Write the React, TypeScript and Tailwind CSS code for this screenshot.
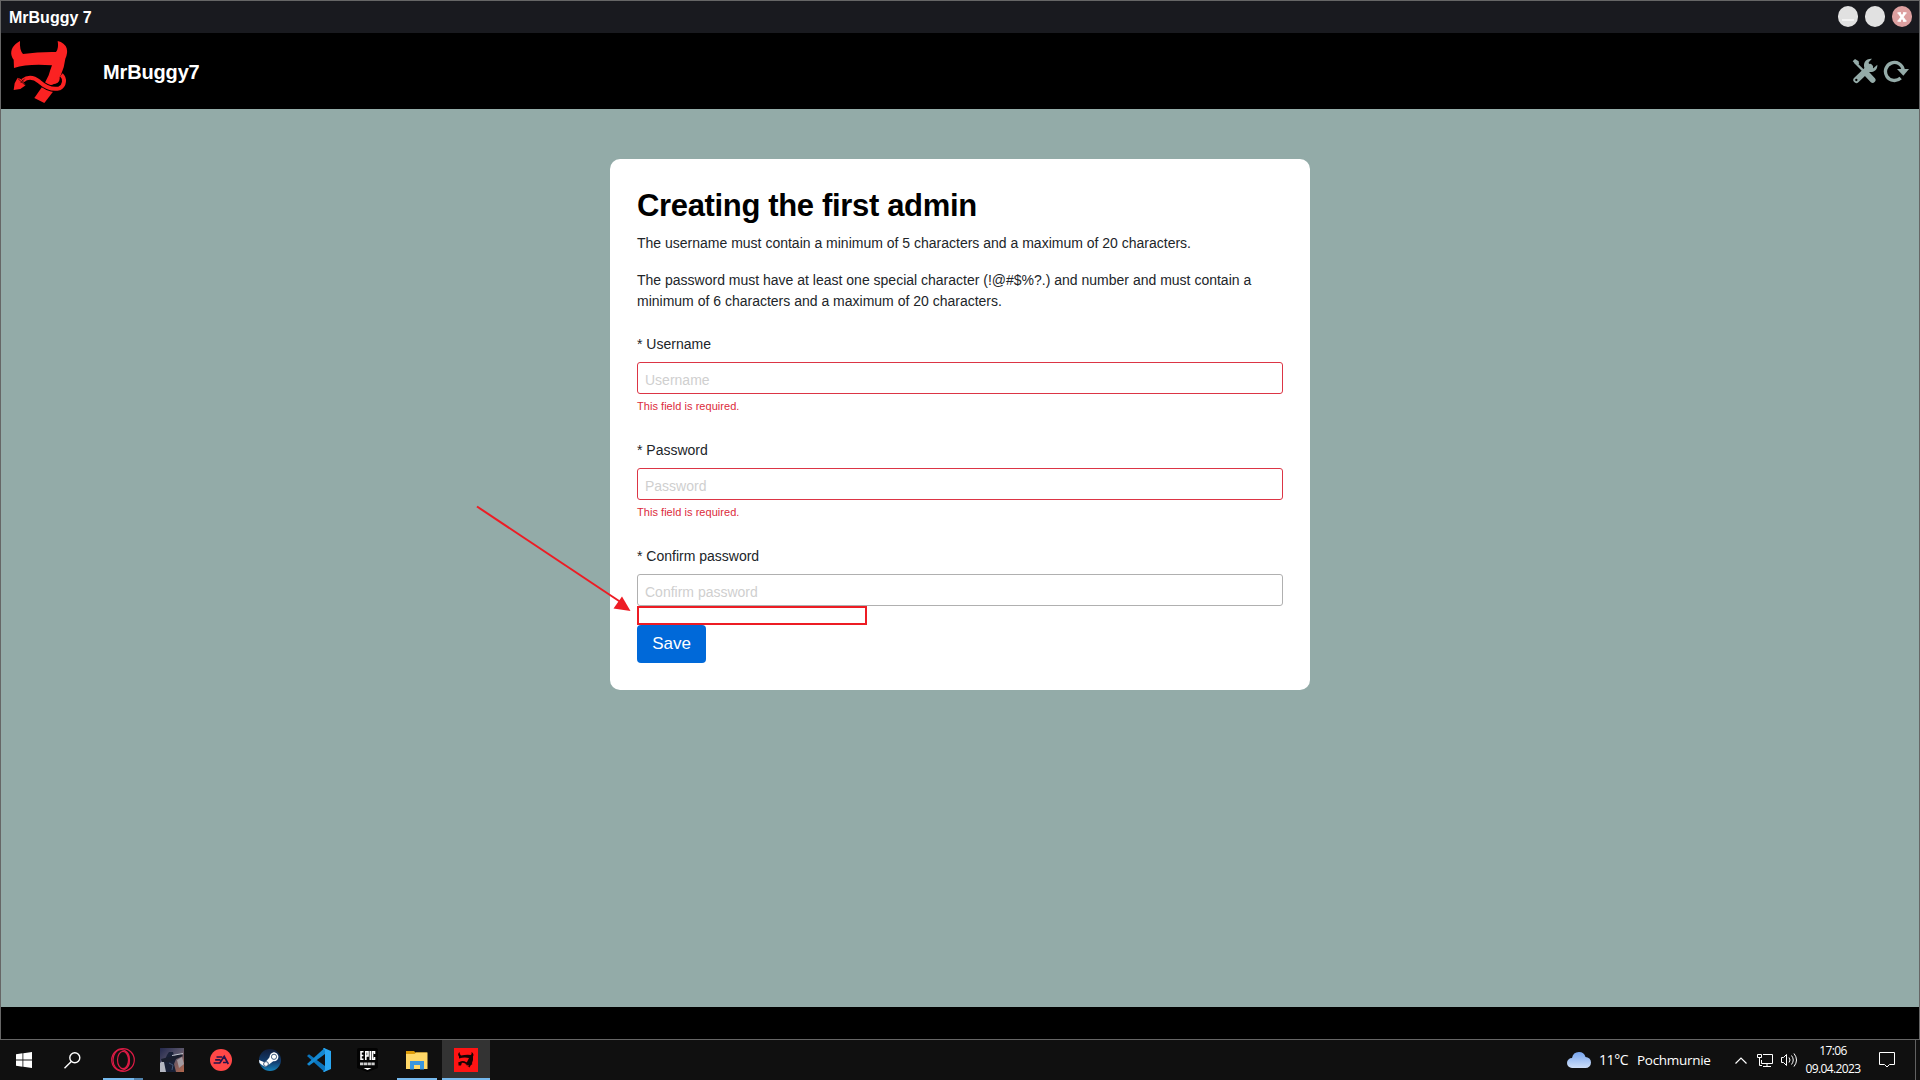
import type { ReactNode } from "react";

function BuggyLogo() {
  return (
    <svg width="58" height="64" viewBox="30 120 174 192" className="mt-0.5 shrink-0">
      <g fill="#fb2222">
        <path d="M60 123C40 134 30 150 35 168Q37 175 41 179L42 204Q85 190 156 196Q150 212 146 226L134 250Q148 262 166 250L183 224Q193 202 196 176Q204 160 200 145Q194 128 173 123Q177 145 168 156Q118 155 69 162Q58 150 60 123Z" />
        <path d="M126 261L159 275L133 309L103 294Z" />
      </g>
      <path
        d="M70 240C87 229 102 232 118 245C134 259 155 271 178 265C197 257 198 235 186 224"
        fill="none"
        stroke="#000"
        strokeWidth="18"
      />
      <path d="M152 252Q178 254 179 236L178 222L160 240Z" fill="#fb2222" />
      <path
        d="M68 242C84 229 102 232 118 245C134 259 155 271 178 265C195 257 196 235 184 224"
        fill="none"
        stroke="#fb2222"
        strokeWidth="12"
      />
      <path d="M53 233L64 238L70 247L77 256L61 267L41 270L44 250Z" fill="#fb2222" />
      <path d="M53 235L77 257M62 249L74 236" fill="none" stroke="#000" strokeWidth="2" />
    </svg>
  );
}

function ToolsIcon() {
  return (
    <svg width="26" height="26" viewBox="0 0 78 78">
      <g fill="none" stroke="#94aba8">
        <path d="M8 12L36 40" strokeWidth="7" />
        <path d="M45 48L62 66" strokeWidth="17" strokeLinecap="round" />
        <path d="M13 66L54 27" strokeWidth="18" strokeLinecap="round" />
      </g>
      <path d="M2 10L9 3L20 10L21 18L13 20Z" fill="#94aba8" />
      <path d="M60 2C40 1 32 16 38 32L52 42C66 43 77 35 76 20L64 31L52 25L50 13Z" fill="#94aba8" />
      <circle cx="13" cy="66" r="3.5" fill="#000" />
    </svg>
  );
}

function RefreshIcon() {
  return (
    <svg width="26" height="24" viewBox="0 0 78 72">
      <path d="M53 57A27 27 0 1 1 61 33" fill="none" stroke="#94aba8" strokeWidth="10" />
      <path d="M42 30H78L61 50Z" fill="#94aba8" />
    </svg>
  );
}

function WindowHeader() {
  return (
    <>
      <div className="flex h-8 shrink-0 items-start justify-between bg-[#191a1f] pl-2 pr-[7px] pt-[5px]">
        <span className="text-base font-bold leading-6 text-white">MrBuggy 7</span>
        <div className="flex gap-[7px]">
          <div className="flex h-[21px] w-5 items-end justify-center rounded-full bg-[#e1e1e1] pb-[6px]">
            <div className="h-0.5 w-3 bg-[#f3f3f3]" />
          </div>
          <div className="h-[21px] w-5 rounded-full bg-[#e1e1e1]" />
          <div className="flex h-[21px] w-5 items-center justify-center rounded-full bg-[#dda0a0]">
            <svg width="10" height="10" viewBox="0 0 10 10">
              <path d="M2 1L8 9M8 1L2 9" stroke="#fff" strokeWidth="2.6" />
              <path d="M.5 1H4M6 1H9.500M.5 9H4M6 9H9.500" stroke="#fff" strokeWidth="1.4" />
            </svg>
          </div>
        </div>
      </div>
      <div className="flex h-[76px] shrink-0 items-center bg-black pl-[9px] pr-2.5">
        <BuggyLogo />
        <span className="ml-[35px] mt-0.5 text-xl font-bold leading-6 tracking-[-0.150px] text-white">MrBuggy7</span>
        <div className="ml-auto flex items-center gap-[5px]">
          <ToolsIcon />
          <RefreshIcon />
        </div>
      </div>
    </>
  );
}

function Field({ label, error, children }: { label: string; error?: string; children?: ReactNode }) {
  return (
    <div>
      <label className="block h-[29px] pt-px text-sm leading-[21px]">* {label}</label>
      <input
        placeholder={label}
        className={
          "block h-8 w-full rounded-[3px] border bg-white px-[7px] pt-1 text-sm outline-none placeholder:text-[#cfcfcf] " +
          (error ? "border-[#dc3545]" : "border-[#b0b0b0]")
        }
      />
      {error && (
        <p className="mt-1 h-[41px] text-[11px] leading-4 tracking-[0.040px] text-[#dc2b3c]">{error}</p>
      )}
      {children}
    </div>
  );
}

function AdminForm() {
  return (
    <section className="h-[531px] w-[700px] rounded-[10px] bg-white px-[27px] pt-[27px] text-[#212529]">
      <h1 className="h-[47px] pt-px text-[31px] font-bold leading-[38px] tracking-[-0.340px] text-black">
        Creating the first admin
      </h1>
      <p className="text-sm leading-[21px]">
        The username must contain a minimum of 5 characters and a maximum of 20 characters.
      </p>
      <p className="mb-[21px] mt-4 text-sm leading-[21px]">
        The password must have at least one special character (!@#$%?.) and number and must contain a minimum of 6
        characters and a maximum of 20 characters.
      </p>
      <Field label="Username" error="This field is required." />
      <Field label="Password" error="This field is required." />
      <Field label="Confirm password">
        <div className="relative h-[19px] w-[230px] border-2 border-[#ed1c24]">
          <svg width="156" height="108" viewBox="0 0 156 108" className="absolute -left-[163px] -top-[104px]">
            <path d="M1 2.500L146 99" stroke="#ed1c24" strokeWidth="2" />
            <path d="M154.500 107L137.500 104.500L146 92.500Z" fill="#ed1c24" />
          </svg>
        </div>
      </Field>
      <button className="block h-[38px] w-[69px] rounded bg-[#0069d9] text-[17px] leading-[36px] text-white">Save</button>
    </section>
  );
}

function WindowsIcon() {
  return (
    <svg width="16" height="16" viewBox="0 0 16 16" fill="#fff">
      <path d="M0 2.200L6.500 1.300V7.500H0ZM7.300 1.200L16 0V7.500H7.300ZM0 8.400H6.500V14.700L0 13.800ZM7.300 8.400H16V16L7.300 14.800Z" />
    </svg>
  );
}

function SearchIcon() {
  return (
    <svg width="17" height="17" viewBox="0 0 17 17" fill="none" stroke="#fff" strokeWidth="1.400">
      <circle cx="10.800" cy="5.800" r="5" />
      <path d="M7.300 9.400L.5 16.200" />
    </svg>
  );
}

function OperaIcon() {
  return (
    <svg width="24" height="24" viewBox="0 0 24 24" fill="none" stroke="#dc1b45" strokeWidth="1.200">
      <circle cx="12" cy="12" r="11.300" />
      <ellipse cx="10" cy="12" rx="8" ry="10.500" />
      <ellipse cx="12" cy="12" rx="5.500" ry="8.700" />
      <path d="M14 3C20 5 20 19 14 21" />
    </svg>
  );
}

function ShooterIcon() {
  return (
    <svg width="24" height="24" viewBox="0 0 24 24">
      <defs>
        <linearGradient id="dusk" x1="0" y1="0" x2="1" y2="1">
          <stop offset="0" stopColor="#23284c" />
          <stop offset=".5" stopColor="#5a566b" />
          <stop offset="1" stopColor="#b5674b" />
        </linearGradient>
      </defs>
      <rect width="24" height="24" fill="url(#dusk)" />
      <path d="M0 15L5 11L8 24H0Z" fill="#b4b7c2" />
      <path d="M17 12L22 9L24 16L19 20Z" fill="#a39aa0" />
      <path d="M7 7L9 4L13 4L14 8L16 11L14 16L16 24H6L4 14Z" fill="#182036" />
      <path d="M1 11L9 9L21 6L23 8L14 12L9 14H2Z" fill="#191e2d" />
      <path d="M12 7.500L23 5.500" stroke="#bec4ce" />
      <path d="M9 15L13 17L12 22" stroke="#405476" fill="none" />
    </svg>
  );
}

function EaIcon() {
  return (
    <svg width="22" height="22" viewBox="0 0 22 22">
      <circle cx="11" cy="11" r="11" fill="#ff4747" />
      <path
        d="M6.500 8H12.300M5.200 10.900H10.500M3.600 14H9.800L14.200 7.500L18.300 15M13 13.500H16.500"
        fill="none"
        stroke="#25144b"
        strokeWidth="1.700"
      />
    </svg>
  );
}

function SteamIcon() {
  return (
    <svg width="22" height="22" viewBox="0 0 22 22">
      <defs>
        <linearGradient id="steam" x2="0" y2="1">
          <stop stopColor="#111d3b" />
          <stop offset=".6" stopColor="#123e70" />
          <stop offset="1" stopColor="#1683bb" />
        </linearGradient>
      </defs>
      <circle cx="11" cy="11" r="11" fill="url(#steam)" />
      <path d="M0 11L6 13.500L10 9L15 3L19 8L14.500 12L10 15.500L6.500 18L3 16L.5 14Z" fill="#fff" />
      <circle cx="15" cy="7.800" r="4.400" fill="#fff" />
      <circle cx="15" cy="7.800" r="2.600" fill="#fff" stroke="#163862" strokeWidth=".8" />
      <circle cx="7" cy="15" r="2.400" fill="#fff" stroke="#163862" strokeWidth=".8" />
    </svg>
  );
}

function VsCodeIcon() {
  return (
    <svg width="24" height="24" viewBox="0 0 24 24">
      <path d="M0 8L2 6.300L18 18V24L17 23.500Z" fill="#0b75bd" />
      <path d="M0 16L2 17.700L18 6V0L17 .5Z" fill="#1489d2" />
      <path d="M17 0L24 3V21L17 24L16 23.500L18 22V2L16 .5Z" fill="#2aa7f2" />
    </svg>
  );
}

function EpicIcon() {
  return (
    <svg width="21" height="24" viewBox="0 0 21 24" className="-ml-px">
      <path d="M2 0H19Q21 0 21 2V20L10.500 24L0 20V2Q0 0 2 0Z" fill="#030303" />
      <path
        d="M6.500 3.800H4V11.200H6.500M4 7.500H6.300M8.800 12V3.800H11V8H8.800M13.300 3V12M17.500 6V3.800H15.500V11.200H17.500V9"
        fill="none"
        stroke="#fff"
        strokeWidth="1.600"
      />
      <path d="M3 15.800H18" stroke="#ccc" strokeWidth="2.800" strokeDasharray="3.300 .5" />
      <path d="M6.500 20H14.500L10.500 22Z" fill="#fff" />
    </svg>
  );
}

function FolderIcon() {
  return (
    <svg width="22" height="19" viewBox="0 0 22 19">
      <path d="M0 0H8L9.500 1.500H21V5H0Z" fill="#dd9b09" />
      <path d="M0 3H8.500L10 1.500H21.500V18H0Z" fill="#ffd868" />
      <path d="M4 18.500V10H18V18.500H14V14H8V18.500Z" fill="#3996df" />
    </svg>
  );
}

function BuggyTaskIcon() {
  return (
    <svg width="24" height="24" viewBox="0 0 24 24">
      <rect width="24" height="24" fill="#ff1414" />
      <path
        d="M5.500 4C3.500 5.500 4 7.500 5 8.500V10.500Q10 9 15 10L13 14L11.500 16.500L15.500 19.500L18 15Q19.500 12 19 8.500Q20.500 6 17.500 4Q18 6 17 7Q12 6.500 7 7.500Q5.500 6 5.500 4Z"
        fill="#150505"
      />
      <path d="M5 15.500Q8 12.500 12 15T18 15.500" fill="none" stroke="#150505" strokeWidth="1.500" />
      <path d="M4.500 14L8 14.500L7 17.500H4.500Z" fill="#150505" />
      <path d="M11 16.500L15 18" stroke="#ff1414" strokeWidth=".7" />
    </svg>
  );
}

function TaskButton({ children, state }: { children: ReactNode; state?: "stacked" | "open" | "active" }) {
  return (
    <div className={"relative flex h-10 w-12 items-center justify-center " + (state === "active" ? "bg-[#333]" : "")}>
      {children}
      {state === "active" && <div className="absolute inset-x-0 bottom-0 h-0.5 bg-[#76b9ed]" />}
      {state === "open" && <div className="absolute inset-x-1 bottom-0 h-0.5 bg-[#76b9ed]" />}
      {state === "stacked" && (
        <div className="absolute inset-x-1 bottom-0 flex h-0.5 bg-[#5083ad]">
          <div className="w-[31px] bg-[#76b9ed]" />
        </div>
      )}
    </div>
  );
}

function Tray() {
  return (
    <div className="ml-auto flex items-center font-['Open_Sans',sans-serif] text-white">
      <svg width="24" height="16" viewBox="0 0 24 16">
        <defs>
          <linearGradient id="cloud" x2="0" y2="1">
            <stop stopColor="#77a5ef" />
            <stop offset="1" stopColor="#cfdff8" />
          </linearGradient>
        </defs>
        <path d="M5 16A5 5 0 0 1 5 6Q6 0 12 0Q17 0 18.500 5A5.500 5.500 0 0 1 18.500 16Z" fill="url(#cloud)" />
      </svg>
      <span className="ml-2 w-[38px] text-sm tracking-[-0.400px]">11°C</span>
      <span className="w-[98px] text-[13.500px] tracking-[-0.300px]">Pochmurnie</span>
      <svg width="12" height="7" viewBox="0 0 12 7" fill="none" stroke="#fff" strokeWidth="1.200">
        <path d="M.5 6.500L6 1L11.500 6.500" />
      </svg>
      <svg width="16" height="14" viewBox="0 0 16 14" fill="none" stroke="#fff" className="ml-2.5">
        <path d="M6 1.500H15.500V10.500H4.500V7M10 10.500V13.500M6 13.500H14M.5 1.500H4.500V4.500H.5ZM2.500 4.500V12.500H5" />
      </svg>
      <svg width="17" height="14" viewBox="0 0 17 14" fill="none" stroke="#fff" className="ml-2">
        <path d="M.5 4.500H2.500L5.500 1.500V12.500L2.500 9.500H.5ZM8 4.500Q10 7 8 9.500M10.500 2.500Q14 7 10.500 11.500M13 .5Q18 7 13 13.500" />
      </svg>
      <div className="ml-1.5 mr-px w-[58px] text-center text-[12px] leading-[18px] tracking-[-0.600px]">
        <div>17:06</div>
        <div>09.04.2023</div>
      </div>
      <svg width="16" height="16" viewBox="0 0 16 16" fill="none" stroke="#fff" className="ml-4">
        <path d="M.5 .5H15.500V12.500H10.500L8 15L5.500 12.500H.5Z" />
      </svg>
      <div className="ml-5 h-10 w-px bg-[#616161]" />
      <div className="w-1" />
    </div>
  );
}

function Taskbar() {
  return (
    <div className="flex h-10 bg-[#101010]">
      <TaskButton>
        <WindowsIcon />
      </TaskButton>
      <TaskButton>
        <SearchIcon />
      </TaskButton>
      <div className="ml-[3px] flex gap-px">
        <TaskButton state="stacked">
          <OperaIcon />
        </TaskButton>
        <TaskButton>
          <ShooterIcon />
        </TaskButton>
        <TaskButton>
          <EaIcon />
        </TaskButton>
        <TaskButton>
          <SteamIcon />
        </TaskButton>
        <TaskButton>
          <VsCodeIcon />
        </TaskButton>
        <TaskButton>
          <EpicIcon />
        </TaskButton>
        <TaskButton state="open">
          <FolderIcon />
        </TaskButton>
        <TaskButton state="active">
          <BuggyTaskIcon />
        </TaskButton>
      </div>
      <Tray />
    </div>
  );
}

export default function App() {
  return (
    <div className="h-[1080px] w-[1920px] overflow-hidden font-['Liberation_Sans',Arial,sans-serif]">
      <div className="flex h-[1040px] flex-col border border-[#666]">
        <WindowHeader />
        <main className="flex grow justify-center bg-[#93aba8] pt-[50px]">
          <AdminForm />
        </main>
        <footer className="h-8 shrink-0 bg-black" />
      </div>
      <Taskbar />
    </div>
  );
}
